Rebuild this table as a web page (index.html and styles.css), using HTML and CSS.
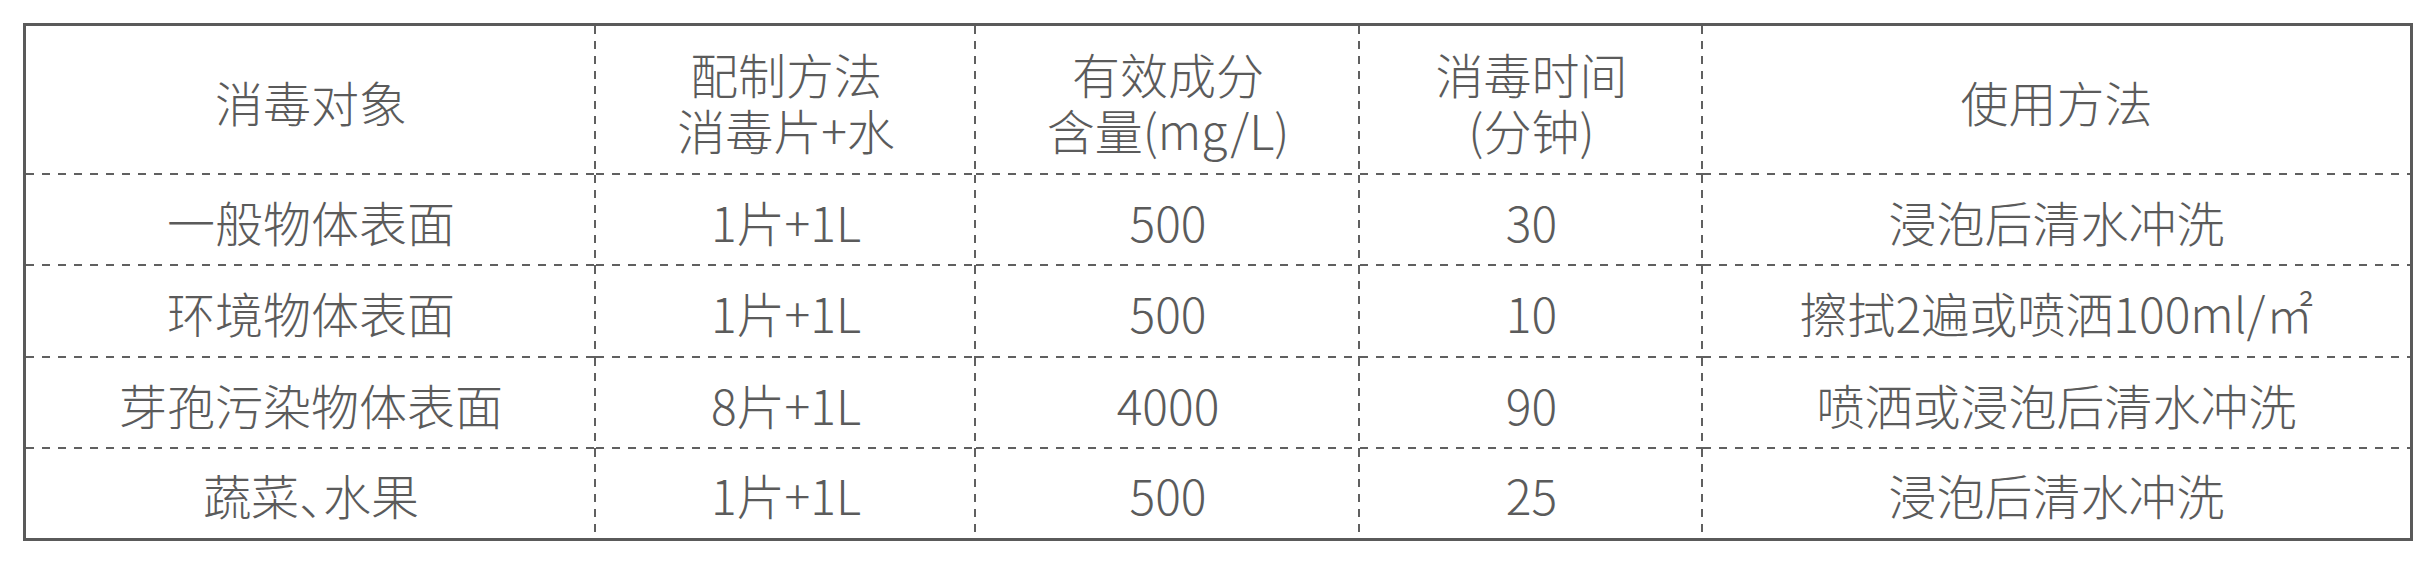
FILE: index.html
```html
<!DOCTYPE html>
<html lang="zh-CN">
<head>
<meta charset="utf-8">
<title>消毒片使用方法</title>
<link rel="stylesheet" href="styles.css">
</head>
<body>
<div class="table">
  <div class="cell">消毒对象</div>
  <div class="cell">配制方法<br>消毒片+水</div>
  <div class="cell">有效成分<br>含量(mg/L)</div>
  <div class="cell">消毒时间<br>(分钟)</div>
  <div class="cell">使用方法</div>

  <div class="cell">一般物体表面</div>
  <div class="cell">1片+1L</div>
  <div class="cell">500</div>
  <div class="cell">30</div>
  <div class="cell">浸泡后清水冲洗</div>

  <div class="cell">环境物体表面</div>
  <div class="cell">1片+1L</div>
  <div class="cell">500</div>
  <div class="cell">10</div>
  <div class="cell">擦拭2遍或喷洒100ml/㎡</div>

  <div class="cell">芽孢污染物体表面</div>
  <div class="cell">8片+1L</div>
  <div class="cell">4000</div>
  <div class="cell">90</div>
  <div class="cell">喷洒或浸泡后清水冲洗</div>

  <div class="cell">蔬菜<span class="half">、</span>水果</div>
  <div class="cell">1片+1L</div>
  <div class="cell">500</div>
  <div class="cell">25</div>
  <div class="cell">浸泡后清水冲洗</div>
</div>
</body>
</html>
```

FILE: styles.css
```css
html, body {
  margin: 0;
  padding: 0;
  background: #ffffff;
}

body {
  padding: 23px 0 0 23px;
}

.table {
  display: grid;
  grid-template-columns: 570px 380px 384px 343px 707px;
  grid-template-rows: 149px 91px 92px 91px 89px;
  width: max-content;
  border: 3px solid #5a5a5a;
}

.cell {
  display: flex;
  align-items: center;
  justify-content: center;
  text-align: center;
  font-family: "Noto Sans CJK SC Light", "Noto Sans CJK SC", "Noto Sans", sans-serif;
  font-weight: 300;
  font-size: 48px;
  line-height: 56px;
  color: #5b5b5b;
  background-image:
    repeating-linear-gradient(to right, #606060 0 8px, transparent 8px 16px),
    repeating-linear-gradient(to bottom, #606060 0 8px, transparent 8px 15px);
  background-repeat: no-repeat;
  background-size: 100% 2px, 2px 100%;
  background-position: left bottom, right top;
}

.half {
  font-feature-settings: "halt" 1;
}

.cell:nth-child(5n) {
  background-size: 100% 2px, 0 0;
}

.cell:nth-last-child(-n+5) {
  background-size: 0 0, 2px 100%;
}

.cell:last-child {
  background-image: none;
}
```
